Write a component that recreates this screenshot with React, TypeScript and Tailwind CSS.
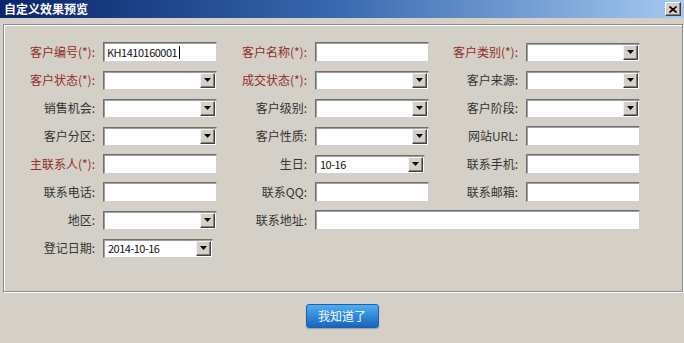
import React from "react";

const FONT = { fontFamily: '"Noto Sans CJK SC", "Noto Sans", sans-serif' };

function Label({ text, red }: { text: string; red?: boolean }) {
  return (
    <div
      className={`flex h-[20px] items-center justify-end pr-[8px] text-[12px] leading-none whitespace-nowrap ${
        red ? "text-[#922b2b]" : "text-[#333333]"
      }`}
    >
      {text}
    </div>
  );
}

function Input({ value, caret, className }: { value?: string; caret?: boolean; className?: string }) {
  return (
    <div
      className={`flex h-[20px] items-center bg-white border border-t-[#6f6f6f] border-l-[#6f6f6f] border-r-[#cfcfcf] border-b-[#cfcfcf] shadow-[inset_1px_1px_0_#a0a0a0] pl-[3px] text-[11px] tracking-[-0.5px] text-[#111] ${
        className ?? "w-[114px]"
      }`}
    >
      {value}
      {caret && <span className="ml-[2px] inline-block h-[13px] w-[1px] bg-black" />}
    </div>
  );
}

function Select({ value, className }: { value?: string; className?: string }) {
  return (
    <div
      className={`flex h-[19px] items-stretch bg-white border border-t-[#6f6f6f] border-l-[#6f6f6f] border-r-[#cfcfcf] border-b-[#cfcfcf] shadow-[inset_1px_1px_0_#a0a0a0] ${
        className ?? "w-[114px]"
      }`}
    >
      <div className="flex flex-1 items-center pl-[4px] text-[11px] tracking-[-0.5px] text-[#111]">{value}</div>
      <div className="my-[1px] mr-[1px] flex w-[15px] items-center justify-center bg-[#d4d0c8] border border-t-[#f4f4f4] border-l-[#f4f4f4] border-r-[#404040] border-b-[#404040] shadow-[inset_-1px_-1px_0_#808080]">
        <svg width="7" height="4" viewBox="0 0 7 4">
          <polygon points="0,0 7,0 3.5,4" fill="#000" />
        </svg>
      </div>
    </div>
  );
}

export default function App() {
  return (
    <div className="flex h-[343px] w-[684px] flex-col bg-[#d4d0c8]" style={FONT}>
      {/* title bar */}
      <div className="flex h-[18px] items-center justify-between bg-gradient-to-r from-[#0a246a] via-[#3a6ab0] to-[#a6caf0] pl-[4px] pr-[3px]">
        <span className="text-[12px] font-bold leading-none text-white">自定义效果预览</span>
        <div className="flex h-[14px] w-[16px] items-center justify-center bg-[#d4d0c8] border border-t-white border-l-white border-r-[#404040] border-b-[#404040] shadow-[inset_-1px_-1px_0_#808080]">
          <svg width="8" height="7" viewBox="0 0 8 7">
            <path d="M0.5 0.5 L7.5 6.5 M7.5 0.5 L0.5 6.5" stroke="#000" strokeWidth="1.6" />
          </svg>
        </div>
      </div>

      {/* group panel */}
      <div className="ml-[3px] mt-[6px] h-[268px] w-[680px] border border-[#8a8a8a] shadow-[1px_1px_0_#ffffff,inset_1px_1px_0_#ffffff] pt-[17px]">
        <div className="grid grid-cols-[99px_114px_98px_114px_97px_114px] items-center gap-y-[8px]">
          <Label text="客户编号(*):" red />
          <Input value="KH1410160001" caret />
          <Label text="客户名称(*):" red />
          <Input />
          <Label text="客户类别(*):" red />
          <Select />

          <Label text="客户状态(*):" red />
          <Select />
          <Label text="成交状态(*):" red />
          <Select />
          <Label text="客户来源:" />
          <Select />

          <Label text="销售机会:" />
          <Select />
          <Label text="客户级别:" />
          <Select />
          <Label text="客户阶段:" />
          <Select />

          <Label text="客户分区:" />
          <Select />
          <Label text="客户性质:" />
          <Select />
          <Label text="网站URL:" />
          <Input />

          <Label text="主联系人(*):" red />
          <Input />
          <Label text="生日:" />
          <Select value="10-16" className="w-[110px]" />
          <Label text="联系手机:" />
          <Input />

          <Label text="联系电话:" />
          <Input />
          <Label text="联系QQ:" />
          <Input />
          <Label text="联系邮箱:" />
          <Input />

          <Label text="地区:" />
          <Select />
          <Label text="联系地址:" />
          <div className="col-span-3">
            <Input className="w-[325px]" />
          </div>

          <Label text="登记日期:" />
          <Select value="2014-10-16" className="w-[110px]" />
        </div>
      </div>

      {/* footer */}
      <div className="flex justify-center pt-[12px]">
        <button className="flex h-[24px] w-[73px] items-center justify-center rounded-[3px] border border-[#1d5fae] bg-gradient-to-b from-[#4eaef0] to-[#1664c2] text-[12px] text-white shadow-[0_1px_1px_rgba(0,0,0,0.25)]">
          我知道了
        </button>
      </div>
    </div>
  );
}
